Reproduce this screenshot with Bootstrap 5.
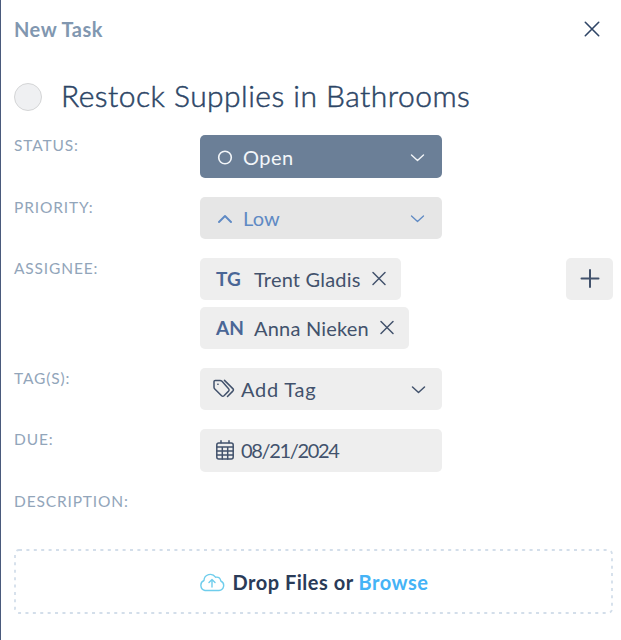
<!DOCTYPE html>
<html lang="en">
<head>
<meta charset="utf-8">
<meta name="viewport" content="width=device-width, initial-scale=1">
<title>New Task</title>
<link href="https://cdn.jsdelivr.net/npm/bootstrap@5.3.0/dist/css/bootstrap.min.css" rel="stylesheet">
<style>
  body { font-family: Lato, "Open Sans", sans-serif; color: #2f4566; background: #fff; overflow: hidden; }
  .task-panel { height: 640px; border-left: 1.5px solid #4a5a7c; padding: 0 8px 0 13px; }
  .panel-head { height: 58px; }
  .panel-title { font-size: 20px; font-weight: 700; color: #8197b0; line-height: 24px; letter-spacing: .5px; }
  .icon-btn { border: 0; background: none; padding: 0; line-height: 0; color: inherit; }
  .close-btn { margin-right: 12px; }
  .task-name { height: 77.4px; }
  .check-dot { width: 28px; height: 28px; border: 1.5px solid #d4d5d6; background: #eff0f2; margin-right: 19px; }
  .task-name h1 { font-size: 30px; font-weight: 300; -webkit-text-stroke: .5px currentColor; color: #2c4566; line-height: 36px; letter-spacing: .47px; padding-bottom: 3px; }
  .field { margin-bottom: 18.9px; }
  .field-label { width: 186px; font-size: 15.5px; line-height: 20px; letter-spacing: .85px; color: #92a5ba; }
  .control { height: 42.4px; border: 0; border-radius: 5px; background: #eee; color: #42526c; font-size: 20px; line-height: 42px; white-space: nowrap; }
  .select-box { width: 242px; padding: 0 17px; }
  .txt { margin-left: 10px; letter-spacing: .5px; }
  .open-box { background: #6b7f97; color: #f3f6f9; }
  .low-box { background: #e6e6e6; color: #5f8ac4; }
  .low-box .txt { letter-spacing: .1px; }
  .tag-box { padding-left: 13px; padding-right: 16px; }
  .tag-box .txt { margin-left: 6px; letter-spacing: .75px; }
  .due-box { padding-left: 16px; }
  .due-box .txt { margin-left: 7px; font-size: 20px; letter-spacing: -1.35px; }
  .people { gap: 6.4px; }
  .person { padding: 0 13px 0 16px; letter-spacing: .2px; }
  .person .icon-btn { margin-left: 9.5px; }
  .initials { font-weight: 700; font-size: 19px; letter-spacing: 0; color: #4a6696; width: 38px; }
  .add-btn { width: 47px; }
  .description-row { height: 39.5px; }
  .drop-zone { height: 65px; font-size: 20px; font-weight: 700; color: #2a3b58; position: relative; letter-spacing: .5px; padding-top: 1px; }
  .drop-zone a { color: #45b3f6; }
  svg { fill: none; stroke: currentColor; flex: none; stroke-linecap: round; stroke-linejoin: round; }
  .drop-outline { position: absolute; inset: 0; width: 100%; height: 100%; stroke: #d3deea; stroke-linecap: butt; }
  .cloud-icon { stroke: #6fcdec; }
</style>
</head>
<body>
<main class="task-panel d-flex flex-column">
  <header class="panel-head d-flex align-items-center justify-content-between">
    <div class="panel-title">New Task</div>
    <button class="icon-btn close-btn" aria-label="Close"><svg width="18" height="18" stroke-width="1.6"><path d="M2.300 2.300 15.700 15.700M15.700 2.300 2.300 15.700"/></svg></button>
  </header>
  <div class="task-name d-flex align-items-center">
    <span class="check-dot rounded-circle"></span>
    <h1 class="mb-0">Restock Supplies in Bathrooms</h1>
  </div>
  <div class="field d-flex">
    <div class="field-label">STATUS:</div>
    <button class="control select-box open-box d-flex align-items-center">
      <svg width="16" height="16" stroke-width="1.6"><circle cx="8" cy="8.500" r="6.300"/></svg>
      <span class="me-auto txt">Open</span>
      <svg width="16" height="10" stroke-width="1.4"><path d="m2.500 3 6 5.500 6-5.500"/></svg>
    </button>
  </div>
  <div class="field d-flex">
    <div class="field-label">PRIORITY:</div>
    <button class="control select-box low-box d-flex align-items-center">
      <svg width="16" height="10" stroke-width="1.9"><path d="m2 9 6-6 6 6"/></svg>
      <span class="me-auto txt">Low</span>
      <svg width="16" height="10" stroke-width="1.3"><path d="m2.500 3 6 5.500 6-5.500"/></svg>
    </button>
  </div>
  <div class="field d-flex">
    <div class="field-label">ASSIGNEE:</div>
    <div class="d-flex flex-column align-items-start people">
      <div class="control person d-flex align-items-center"><span class="initials">TG</span><span>Trent Gladis</span>
        <button class="icon-btn" aria-label="Remove Trent Gladis"><svg width="18" height="18" stroke-width="1.5"><path d="M3 2.500 15 14.500M15 2.500 3 14.500"/></svg></button></div>
      <div class="control person d-flex align-items-center"><span class="initials">AN</span><span>Anna Nieken</span>
        <button class="icon-btn" aria-label="Remove Anna Nieken"><svg width="18" height="18" stroke-width="1.5"><path d="M3 2.500 15 14.500M15 2.500 3 14.500"/></svg></button></div>
    </div>
    <button class="control add-btn ms-auto d-flex align-items-center justify-content-center p-0" aria-label="Add assignee"><svg width="20" height="20" stroke-width="2"><path d="M10 1v17M1.500 9.500h17"/></svg></button>
  </div>
  <div class="field d-flex">
    <div class="field-label">TAG(S):</div>
    <button class="control select-box tag-box d-flex align-items-center">
      <svg width="22" height="20" stroke-width="1.5"><path d="M1 2.600v5.600q0 1 .8 1.800l6.800 6.700q1.200 1.100 2.400 0l4.600-4.600q1.100-1.200 0-2.400L9 2.200Q8.200 1.400 7 1.400H2.200Q1 1.400 1 2.600Z"/><path d="m11.500 1.400 8.300 8.200q1.200 1.200 0 2.500l-5.300 5.400M4.800 5.200h.3"/></svg>
      <span class="me-auto txt">Add Tag</span>
      <svg width="16" height="10" stroke-width="1.5"><path d="m2.500 3 6 5.500 6-5.500"/></svg>
    </button>
  </div>
  <div class="field d-flex">
    <div class="field-label">DUE:</div>
    <button class="control select-box due-box d-flex align-items-center">
      <svg width="18" height="20" stroke-width="1.5"><rect x=".8" y="3" width="16.400" height="16" rx="2"/><path d="M1 7h16M1 11h16M1 15h16M6.300 7v12M11.700 7v12M5 .8v2M13 .8v2"/></svg>
      <span class="txt">08/21/2024</span>
    </button>
  </div>
  <div class="field d-flex description-row"><div class="field-label">DESCRIPTION:</div></div>
  <div class="drop-zone d-flex align-items-center justify-content-center">
    <svg class="drop-outline" stroke-width="1.8"><rect x="1" y="1" width="597" height="63" rx="4" stroke-dasharray="3 4.400"/></svg>
    <svg class="cloud-icon" width="26" height="20" stroke-width="1.4"><path d="M6 18.500h14a5 5 0 0 0 1.800-9.500Q21 4.500 16.500 5.200A6.300 6.300 0 0 0 5 8.500 5.300 5.300 0 0 0 6 18.500ZM13 15V7.500m-3 3 3-3 3 3"/></svg>
    <span class="ms-1 ps-1">Drop Files or <a href="#" class="text-decoration-none">Browse</a></span>
  </div>
</main>
</body>
</html>
